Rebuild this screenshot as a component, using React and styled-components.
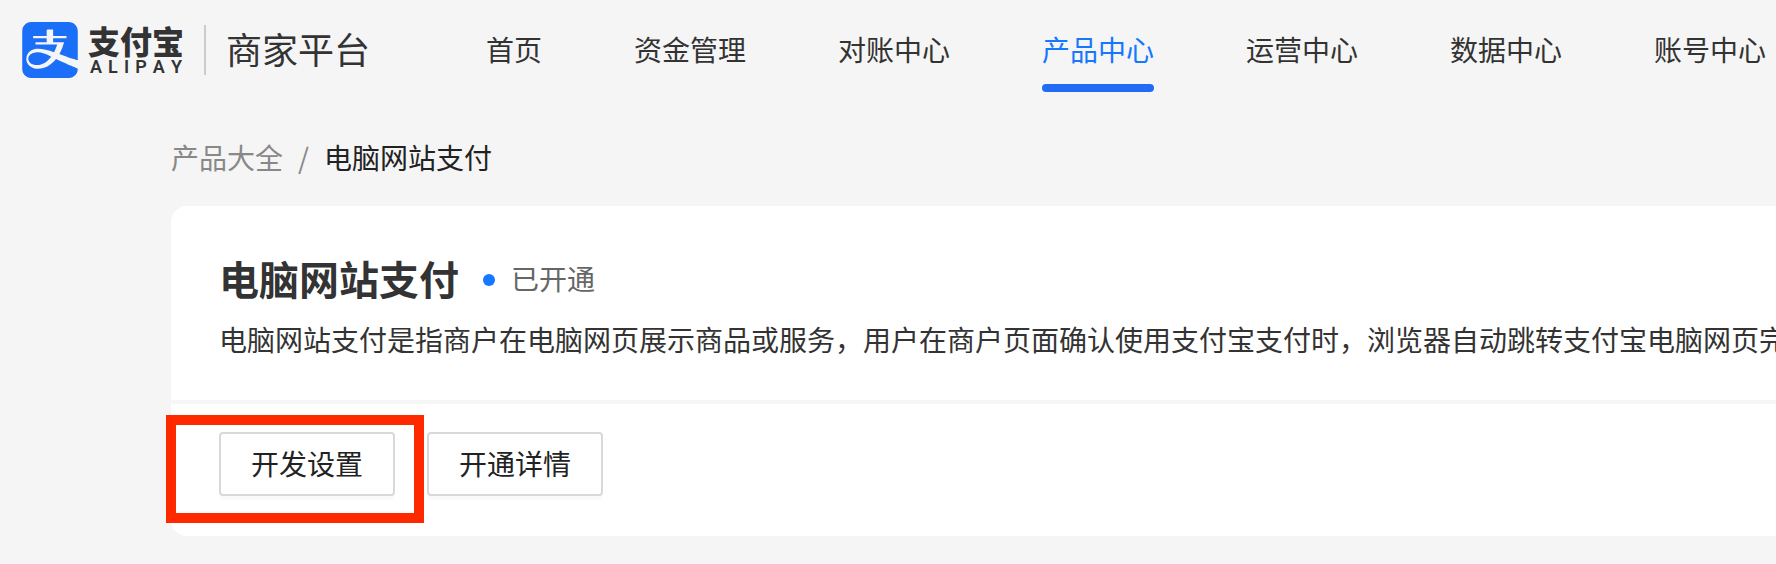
import React from 'react'
import styled, { createGlobalStyle } from 'styled-components'

const GlobalStyle = createGlobalStyle`
    * {
        box-sizing: border-box;
    }

    body {
        margin: 0;
        background: #f5f5f5;
        color: #333;
        font-family: "Noto Sans CJK SC", sans-serif;
        font-size: 28px;
        line-height: 40px;
        overflow-x: hidden;
    }
`
const Header = styled.header`
    display: flex;
    align-items: center;
    height: 100px;
    padding-left: 22px;
    white-space: nowrap;
    overflow: hidden;
`
const Brand = styled.a`
    display: flex;
    align-items: center;
    flex: none;
    color: #333;
    text-decoration: none;
`
const LogoMark = styled.svg`
    width: 56px;
    height: 56px;
    fill: #1b6ef8;
`
const Wordmark = styled.span`
    display: flex;
    flex-direction: column;
    align-items: center;
    width: 96px;
    margin-left: 10px;
`
const WordmarkName = styled.span`
    font-size: 32px;
    font-weight: 900;
    line-height: 34px;
`
const WordmarkLatin = styled.span`
    display: flex;
    justify-content: space-between;
    width: 92px;
    font-family: Roboto, sans-serif;
    font-size: 18px;
    font-weight: 600;
    line-height: 20px;
`
const Platform = styled.span`
    margin-left: 20px;
    padding: 0 0 4px 20px;
    border-left: 2px solid #ccc;
    font-size: 36px;
    line-height: 46px;
`
const Nav = styled.nav`
    display: flex;
    flex: none;
    gap: 92px;
    margin-left: 116px;
`
const NavLink = styled.a`
    position: relative;
    flex: none;
    padding-bottom: 2px;
    color: ${props => props.$active ? '#1677ff' : '#333'};
    text-decoration: none;

    &::after {
        content: '';
        display: ${props => props.$active ? 'block' : 'none'};
        position: absolute;
        top: 55px;
        left: 0;
        width: 100%;
        height: 8px;
        border-radius: 4px;
        background: #226bf3;
    }
`
const Main = styled.main`
    padding: 37px 0 28px 171px;
`
const Breadcrumb = styled.nav`
    display: flex;
    gap: 15px;
    margin-bottom: 29px;
    color: #888;

    a {
        color: inherit;
        text-decoration: none;
    }
`
const Current = styled.span`
    color: #222;
`
const Card = styled.section`
    border-radius: 16px 0 0 16px;
    background: #fff;
`
const Summary = styled.div`
    padding: 46px 0 41px 48px;
    border-bottom: 4px solid #f6f6f6;
    overflow: hidden;
`
const TitleRow = styled.div`
    display: flex;
    align-items: center;
`
const Title = styled.h1`
    margin: 0;
    font-size: 40px;
    font-weight: 700;
    line-height: 52px;
`
const Status = styled.span`
    display: flex;
    align-items: center;
    gap: 16px;
    margin-left: 24px;
    color: #666;

    &::before {
        content: '';
        width: 12px;
        height: 12px;
        margin-top: 4px;
        border-radius: 50%;
        background: #1677ff;
    }
`
const Description = styled.p`
    margin: 15px 0 0;
    white-space: nowrap;
`
const Actions = styled.div`
    display: flex;
    gap: 32px;
    padding: 28px 48px 40px;
`
const Highlight = styled.div`
    position: relative;

    &::after {
        content: '';
        position: absolute;
        inset: -17px -29px -27px -53px;
        border: 10px solid #ff2900;
        pointer-events: none;
    }
`
const Button = styled.button`
    height: 64px;
    padding: 0 30px 2px;
    border: 2px solid #d9d9d9;
    border-radius: 4px;
    background: #fff;
    box-shadow: 0 4px 0 rgba(0, 0, 0, 0.02);
    color: #222;
    font: inherit;
    cursor: pointer;
`

const links = ['首页', '资金管理', '对账中心', '产品中心', '运营中心', '数据中心', '账号中心']

const Logo = () => (
    <LogoMark viewBox="0 0 24 24" aria-hidden="true">
        <path d="M19.695 15.07c3.426 1.158 4.203 1.22 4.203 1.22V3.846c0-2.124-1.705-3.845-3.81-3.845H3.914C1.808.001.102 1.722.102 3.846v16.31c0 2.123 1.706 3.845 3.813 3.845h16.173c2.105 0 3.81-1.722 3.81-3.845v-.157s-6.19-2.602-9.315-4.119c-2.096 2.602-4.8 4.181-7.607 4.181-4.75 0-6.361-4.19-4.112-6.949.49-.602 1.324-1.175 2.617-1.497 2.025-.502 5.247.313 8.266 1.317a16.796 16.796 0 0 0 1.341-3.302H5.781v-.952h4.799V6.975H4.77v-.953h5.81V3.591s0-.409.411-.409h2.347v2.84h5.744v.951h-5.744v1.704h4.69a19.453 19.453 0 0 1-1.986 5.06c1.424.52 2.702 1.011 3.654 1.333m-13.81-2.032c-.596.06-1.71.325-2.321.869-1.83 1.608-.735 4.55 2.968 4.55 2.151 0 4.301-1.388 5.99-3.61-2.403-1.182-4.438-2.028-6.637-1.809" />
    </LogoMark>
)

const App = () => {
    const nav = links.map(name => {
        return (
            <NavLink key={name} href="#" $active={name === '产品中心'}>{name}</NavLink>
        )
    })

    return (
        <>
            <GlobalStyle />
            <Header>
                <Brand href="#">
                    <Logo />
                    <Wordmark>
                        <WordmarkName>支付宝</WordmarkName>
                        {/* one flex item per letter, spread under the chinese name */}
                        <WordmarkLatin>
                            {'ALIPAY'.split('').map((letter, i) => <span key={i}>{letter}</span>)}
                        </WordmarkLatin>
                    </Wordmark>
                    <Platform>商家平台</Platform>
                </Brand>
                <Nav>{nav}</Nav>
            </Header>
            <Main>
                <Breadcrumb>
                    <a href="#">产品大全</a>
                    <span>/</span>
                    <Current>电脑网站支付</Current>
                </Breadcrumb>
                <Card>
                    <Summary>
                        <TitleRow>
                            <Title>电脑网站支付</Title>
                            <Status>已开通</Status>
                        </TitleRow>
                        <Description>
                            电脑网站支付是指商户在电脑网页展示商品或服务，用户在商户页面确认使用支付宝支付时，浏览器自动跳转支付宝电脑网页完
                        </Description>
                    </Summary>
                    <Actions>
                        <Highlight>
                            <Button type="button">开发设置</Button>
                        </Highlight>
                        <Button type="button">开通详情</Button>
                    </Actions>
                </Card>
            </Main>
        </>
    )
}

export default App
